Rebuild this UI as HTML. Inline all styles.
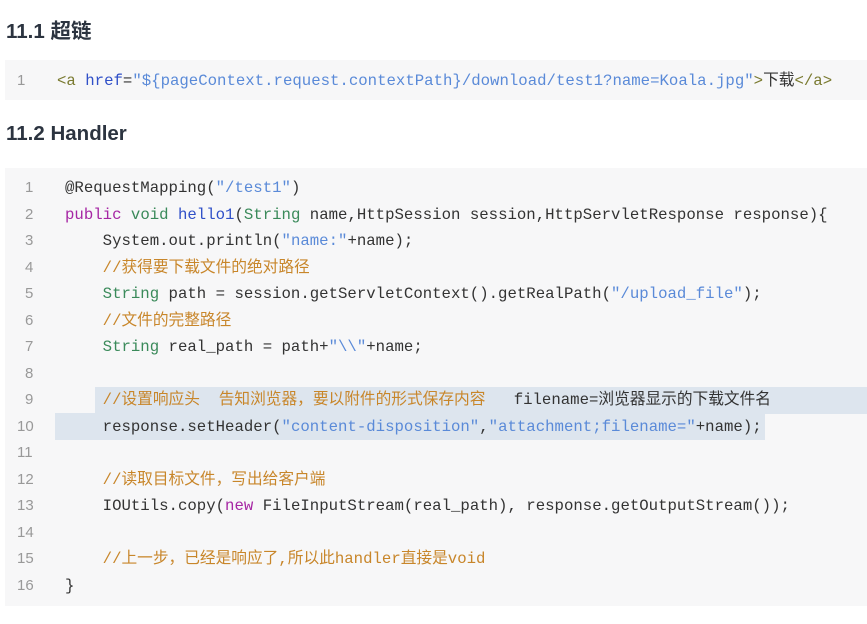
<!DOCTYPE html>
<html><head><meta charset="utf-8"><style>
body{margin:0;width:867px;height:624px;background:#fff;overflow:hidden;position:relative;font-family:"Liberation Sans","Noto Sans CJK SC",sans-serif}
h2{position:absolute;left:6px;margin:0;font-size:20.5px;font-weight:bold;color:#2c3440}
.blk{position:absolute;left:5px;right:0;background:#f7f7f8}
.ln{position:absolute;font-family:"Liberation Mono","Noto Sans CJK SC",monospace;font-size:15.7px;white-space:pre;color:#333;line-height:26.5px;height:26.5px}
.n{position:absolute;left:17px;color:#999;font-family:"Liberation Sans",sans-serif;font-size:15px;line-height:26.5px}
.k{color:#a626a4}.t{color:#3a8a5a}.f{color:#3050c8}.s{color:#5a8ad8}.c{color:#c8862a}.tag{color:#7a7a30}
.hl{position:absolute;background:#dde5ee}
</style></head><body>
<h2 style="top:14px">11.1 超链</h2>
<div class="blk" style="top:60px;height:40px"></div>
<div class="n" style="top:68px">1</div>
<div class="ln" style="left:57px;top:68px"><span class="tag">&lt;a</span> <span class="f">href</span>=<span class="s">"${pageContext.request.contextPath}/download/test1?name=Koala.jpg"</span><span class="tag">&gt;</span>下载<span class="tag">&lt;/a&gt;</span></div>
<h2 style="top:122px">11.2 Handler</h2>
<div class="blk" style="top:168px;height:438px"></div>
<div class="hl" style="left:95px;right:0;top:387px;height:26.5px"></div>
<div class="hl" style="left:55px;width:710px;top:413px;height:27px"></div>
<div id="code"></div>
<script>
var L=[
'@RequestMapping(<span class="s">"/test1"</span>)',
'<span class="k">public</span> <span class="t">void</span> <span class="f">hello1</span>(<span class="t">String</span> name,HttpSession session,HttpServletResponse response){',
'    System.out.println(<span class="s">"name:"</span>+name);',
'    <span class="c">//获得要下载文件的绝对路径</span>',
'    <span class="t">String</span> path = session.getServletContext().getRealPath(<span class="s">"/upload_file"</span>);',
'    <span class="c">//文件的完整路径</span>',
'    <span class="t">String</span> real_path = path+<span class="s">"\\\\"</span>+name;',
'',
'    <span class="c">//设置响应头  告知浏览器，要以附件的形式保存内容   </span>filename=浏览器显示的下载文件名',
'    response.setHeader(<span class="s">"content-disposition"</span>,<span class="s">"attachment;filename="</span>+name);',
'',
'    <span class="c">//读取目标文件，写出给客户端</span>',
'    IOUtils.copy(<span class="k">new</span> FileInputStream(real_path), response.getOutputStream());',
'',
'    <span class="c">//上一步，已经是响应了,所以此handler直接是void</span>',
'}'];
var h='';for(var i=0;i<L.length;i++){var y=175+i*26.5;h+='<div class="n" style="top:'+y+'px;left:'+(i<9?25:17)+'px">'+(i+1)+'</div><div class="ln" style="left:65px;top:'+y+'px">'+L[i]+'</div>';}
document.getElementById('code').innerHTML=h;
</script>
</body></html>
